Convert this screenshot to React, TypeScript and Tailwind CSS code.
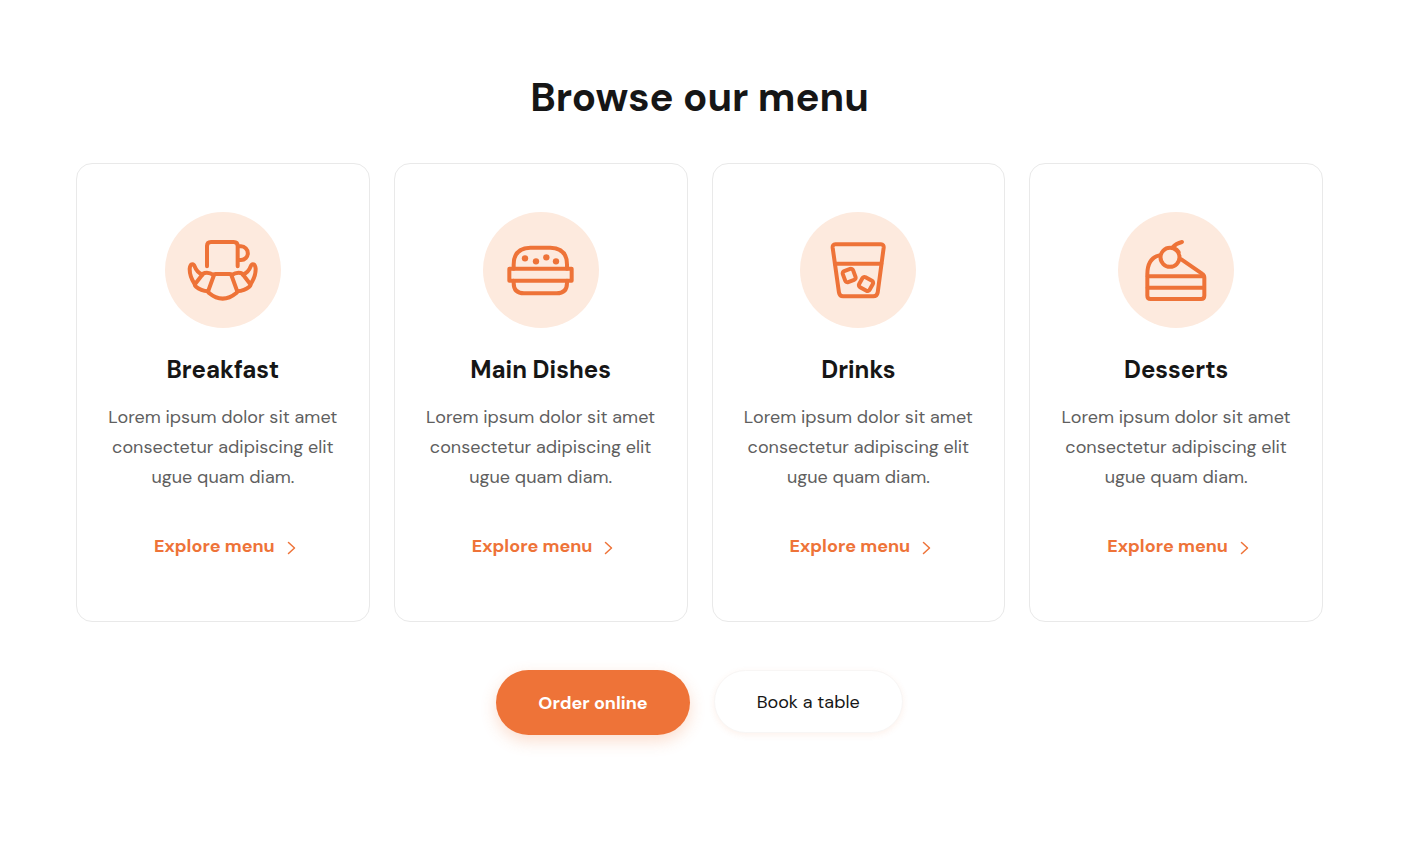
import React from 'react';

const iconProps = {
  viewBox: '15 11 348 348',
  fill: 'none',
  stroke: 'currentColor',
  strokeWidth: 12,
  strokeLinecap: 'round',
  strokeLinejoin: 'round',
  'aria-hidden': true,
  className: 'h-full w-full',
} as const;

const BreakfastIcon = () => (
  <svg {...iconProps}>
    {/* Mug */}
    <path d="M141 174V113Q141 101 153 101H221Q233 101 233 113V174" />
    <path d="M234 114H243A20 20 0 0 1 243 155H234" />
    {/* Croissant */}
    <path d="M166 197H210Q213 197 214 200L231 247Q232 251 229 254Q188 288 147 254Q144 251 145 247L162 200Q163 197 166 197Z" />
    <path d="M161 200Q147 191 134 194Q130 195 128 198L106 226Q103 231 108 235Q122 247 145 249" />
    <path d="M215 200Q229 191 242 194Q246 195 248 198L270 226Q273 231 268 235Q254 247 231 249" />
    <path d="M127 199Q110 191 104 174Q101 166 95 168Q90 170 89 182Q89 205 104 227" />
    <path d="M249 199Q266 191 272 174Q275 166 281 168Q286 170 287 182Q287 205 272 227" />
  </svg>
);

const BurgerIcon = () => (
  <svg {...iconProps}>
    <path d="M107 181V169Q107 119 157 118H217Q267 119 267 169V181" />
    <rect x="94" y="181" width="187" height="36" />
    <path d="M107 217V224Q107 255 138 255H236Q267 255 267 224V217" />
    <g fill="currentColor" stroke="none">
      <circle cx="141" cy="150" r="9.5" />
      <circle cx="174" cy="159" r="9.5" />
      <circle cx="205" cy="147" r="9.5" />
      <circle cx="234" cy="159" r="9.5" />
    </g>
  </svg>
);

const DrinkIcon = () => (
  <svg {...iconProps}>
    <path d="M121 108H258Q267 108 266 118L248 253Q246 264 235 264H144Q134 264 132 253L113 118Q112 108 121 108Z" />
    <path d="M120 166H259" />
    <rect x="146" y="184" width="33" height="35" rx="7" transform="rotate(-20 162.5 201.5)" />
    <rect x="195" y="210" width="36" height="34" rx="7" transform="rotate(29 213 227)" />
  </svg>
);

const CakeIcon = () => (
  <svg {...iconProps}>
    <path d="M139 141Q103 150 103 198V262Q103 272 113 272H264Q274 272 274 262V208Q274 200 267 196L205 153" />
    <path d="M104 204H272M104 238H272" />
    <circle cx="171" cy="147" r="28.5" />
    <path d="M179 117Q189 105 207 101" />
    <path d="M184 120Q192 123 197 131" />
  </svg>
);

const menuItems = [
  { title: 'Breakfast', icon: BreakfastIcon },
  { title: 'Main Dishes', icon: BurgerIcon },
  { title: 'Drinks', icon: DrinkIcon },
  { title: 'Desserts', icon: CakeIcon },
];

const App: React.FC = () => {
  return (
    <section className="bg-white pt-[72px] pb-24 pl-[76px] pr-[79px] font-['DM_Sans',Inter,sans-serif] text-[#161616]">
      <h2 className="text-center text-[40px] leading-[50px] font-bold">Browse our menu</h2>

      <div className="mt-[41px] grid grid-cols-1 gap-6 sm:grid-cols-2 lg:grid-cols-4">
        {menuItems.map(({ title, icon: Icon }) => (
          <article
            key={title}
            className="flex flex-col items-center rounded-2xl border border-[#e9e9e9] px-6 pt-12 pb-[59px] text-center"
          >
            <div className="size-[116px] rounded-full bg-[#fdeade] text-[#ee7338]">
              <Icon />
            </div>
            <h3 className="mt-[25px] text-2xl leading-[34px] font-bold">{title}</h3>
            <p className="mt-[15px] max-w-60 text-lg leading-[30px] text-[#5f5f5f]">
              Lorem ipsum dolor sit amet consectetur adipiscing elit ugue quam diam.
            </p>
            <a href="#" className="mt-[38px] ml-1 flex items-center gap-3 text-lg leading-8 font-bold text-[#ee7338]">
              Explore menu
              <svg viewBox="0 0 9 14" fill="none" stroke="currentColor" strokeWidth="1.5" strokeLinecap="round" strokeLinejoin="round" aria-hidden className="mt-1 h-3.5 w-[9px]">
                <path d="M1.5 1.5L7.5 7L1.5 12.5" />
              </svg>
            </a>
          </article>
        ))}
      </div>

      <div className="mt-12 flex flex-wrap items-start justify-center gap-6">
        <button
          type="button"
          className="h-[65px] rounded-full bg-[#ee7338] px-[42px] text-lg font-bold text-white shadow-[0_6px_16px_rgba(238,115,56,0.24)]"
        >
          Order online
        </button>
        <button
          type="button"
          className="h-[63px] rounded-full border border-[#f8f6f5] bg-white px-[42px] text-lg shadow-[0_2px_6px_rgba(238,115,56,0.1)]"
        >
          Book a table
        </button>
      </div>
    </section>
  );
};

export default App;
